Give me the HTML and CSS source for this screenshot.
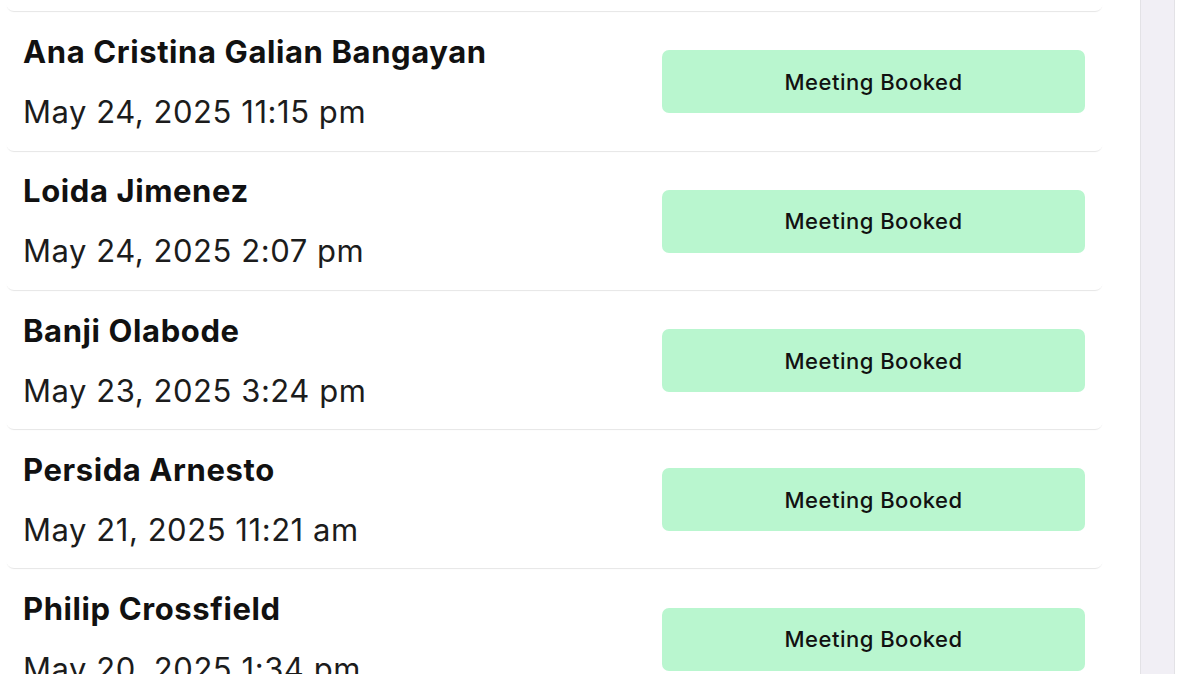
FILE: index.html
```html
<!DOCTYPE html>
<html lang="en">
  <head>
    <meta charset="UTF-8" />
    <meta name="viewport" content="width=device-width, initial-scale=1.0" />
    <title>Leads</title>
    <link rel="stylesheet" href="styles.css">
  </head>
  <body>
    <div class="layout">
      <main class="list">
        <div class="card">
          <div class="info">
            <h3>Jonathan Reyes</h3>
            <p>May 25, 2025 9:02 am</p>
          </div>
          <span class="status">Meeting Booked</span>
        </div>
        <div class="card">
          <div class="info">
            <h3>Ana Cristina Galian Bangayan</h3>
            <p>May 24, 2025 11:15 pm</p>
          </div>
          <span class="status">Meeting Booked</span>
        </div>
        <div class="card">
          <div class="info">
            <h3>Loida Jimenez</h3>
            <p>May 24, 2025 2:07 pm</p>
          </div>
          <span class="status">Meeting Booked</span>
        </div>
        <div class="card">
          <div class="info">
            <h3>Banji Olabode</h3>
            <p>May 23, 2025 3:24 pm</p>
          </div>
          <span class="status">Meeting Booked</span>
        </div>
        <div class="card">
          <div class="info">
            <h3>Persida Arnesto</h3>
            <p>May 21, 2025 11:21 am</p>
          </div>
          <span class="status">Meeting Booked</span>
        </div>
        <div class="card">
          <div class="info">
            <h3>Philip Crossfield</h3>
            <p>May 20, 2025 1:34 pm</p>
          </div>
          <span class="status">Meeting Booked</span>
        </div>
      </main>
      <aside class="rail"></aside>
    </div>
  </body>
</html>
```

FILE: styles.css
```css
* {
  box-sizing: border-box;
  margin: 0;
  padding: 0;
}
html,
body {
  height: 100%;
  overflow: hidden;
}
body {
  font-family: Inter, "Liberation Sans", sans-serif;
  background-color: #fff;
  color: #111;
}
.layout {
  display: flex;
  height: 100%;
}
.list {
  width: 1140px;
  padding: 0 37px 0 6px;
  margin-top: -126px;
}
.card {
  display: flex;
  align-items: center;
  justify-content: space-between;
  height: 137.3px;
  margin-bottom: 2px;
  padding: 0 18px 0 17px;
  background-color: #fff;
  border-radius: 8px;
  box-shadow: 0 2px 1px -1px rgba(0, 0, 0, 0.1);
}
.info h3 {
  font-size: 31px;
  font-weight: 700;
  line-height: 38px;
  letter-spacing: 0.6px;
  margin-bottom: 22px;
}
.info p {
  font-size: 31px;
  line-height: 38px;
  letter-spacing: 0.55px;
  color: #1c1c1c;
}
.status {
  display: flex;
  align-items: center;
  justify-content: center;
  width: 423px;
  height: 63px;
  background-color: #b9f6cf;
  border-radius: 7px;
  font-size: 22px;
  font-weight: 500;
  letter-spacing: 0.5px;
}
.rail {
  width: 35px;
  background-color: #f1eff5;
  border-left: 1px solid #e3e2e6;
  border-right: 1px solid #e3e2e6;
}
```
